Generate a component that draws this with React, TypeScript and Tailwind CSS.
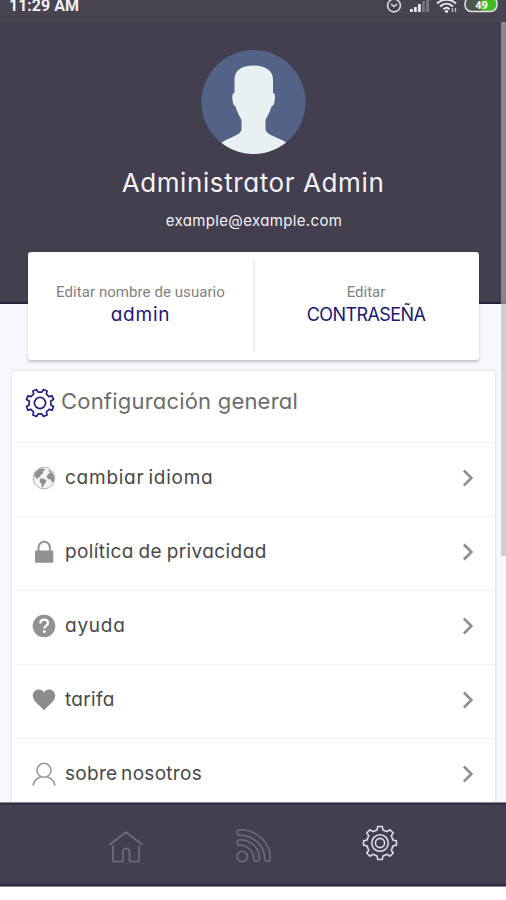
import type { ReactNode } from "react";

type SettingRow = {
  label: string;
  icon: ReactNode;
  textClass: string;
};

// Rounded gear outline, teeth evenly spread around (cx, cy).
function gearPath(cx: number, cy: number, outer: number, inner: number, offset: number) {
  const steps: [number, number][] = [
    [-12.5, inner],
    [-8, outer],
    [8, outer],
    [12.5, inner],
  ];
  const points: string[] = [];
  for (let tooth = 0; tooth < 8; tooth++) {
    for (const [delta, radius] of steps) {
      const angle = ((tooth * 45 + offset + delta) * Math.PI) / 180;
      points.push(`${(cx + radius * Math.cos(angle)).toFixed(2)} ${(cy + radius * Math.sin(angle)).toFixed(2)}`);
    }
  }
  return `M${points.join("L")}Z`;
}

function GearIcon() {
  return (
    <svg width="30" height="30" viewBox="0 0 30 30" fill="none" stroke="#242080" strokeWidth="1.7" strokeLinejoin="round" aria-hidden>
      <path d={gearPath(15, 15, 14, 11, 22.5)} />
      <circle cx="15" cy="15" r="5.6" />
    </svg>
  );
}

function GlobeIcon() {
  return (
    <svg width="24" height="24" viewBox="0 0 24 24" aria-hidden>
      <circle cx="12" cy="12" r="10.8" fill="#f4f4f4" stroke="#b0b0b0" strokeWidth="1" />
      <path
        fill="#8f8f8f"
        d="M4 5.5L8 2.5l4 .2 1.2 1.6-2.4 1.2.4 1.8-2.6 1.8-.4 2.2-2.4-.3.8 2-1.6-.2-2.4-2.6C1.8 8 3 6.8 4 5.5zM8.4 12.4l3.2.4 2.6 1.5-.6 2.7-1.8 1.6-.8 3-1.3-.5-.4-3.5-1.8-2.2zM15.5 4.2l2.500.2 3 3.6 1.3 4-.6 3.8-1.8.8-1.3-3-2.600-.6-1.300-2.400 1.300-2.600 2-.8-.5-1.500z"
      />
    </svg>
  );
}

function LockIcon() {
  return (
    <svg width="24" height="24" viewBox="0 0 24 24" aria-hidden>
      <path d="M6.5 12V7.500a5.700 5.700 0 0 1 11.400 0V12" fill="none" stroke="#919191" strokeWidth="2" />
      <rect x="3" y="10.500" width="18.300" height="12.300" rx="1" fill="#919191" />
    </svg>
  );
}

function HelpIcon() {
  return (
    <svg width="24" height="24" viewBox="0 0 24 24" aria-hidden>
      <circle cx="12" cy="12" r="11.300" fill="#919191" />
      <path d="M8.300 9.500c0-2.400 1.500-3.800 3.800-3.800s3.900 1.300 3.900 3.400c0 2.800-3.700 2.700-3.700 5.400" fill="none" stroke="#fff" strokeWidth="2.300" />
      <circle cx="12.300" cy="17.500" r="1.500" fill="#fff" />
    </svg>
  );
}

function HeartIcon() {
  return (
    <svg width="24" height="24" viewBox="0 0 24 24" aria-hidden>
      <path
        fill="#8c8c8c"
        d="M17 1.500c-2.200 0-4 1.200-5 2.900-1-1.700-2.800-2.900-5-2.900C3.500 1.500.800 4.200.800 7.600c0 6.300 7 9.600 11.200 15 4.200-5.400 11.200-8.700 11.200-15C23.200 4.200 20.500 1.500 17 1.500z"
      />
    </svg>
  );
}

function PersonIcon() {
  return (
    <svg width="24" height="24" viewBox="0 0 24 24" fill="none" stroke="#999" strokeWidth="1.600" strokeLinecap="round" aria-hidden>
      <circle cx="12" cy="8.300" r="7" />
      <path d="M1.200 23c.7-3.900 3.300-6.400 7-8M22.800 23c-.7-3.900-3.300-6.400-7-8" />
    </svg>
  );
}

function ChevronIcon() {
  return (
    <svg width="12" height="18" viewBox="0 0 12 18" fill="none" stroke="#8f8f8f" strokeWidth="2.600" aria-hidden>
      <path d="M1.900 1.500L9.400 9l-7.500 7.500" />
    </svg>
  );
}

function StatusIcons() {
  return (
    <svg width="120" height="16" viewBox="0 0 120 16" fill="none" aria-hidden>
      <g stroke="#dddce2" strokeWidth="1.600">
        <circle cx="8" cy="5.500" r="6.400" />
        <path d="M5 4l3 2.500L11 4" />
      </g>
      <g fill="#e6e5ea">
        <rect x="24" y="9" width="2.800" height="3" />
        <rect x="28" y="7" width="2.800" height="5" />
        <rect x="32" y="4" width="2.800" height="8" />
      </g>
      <g fill="#77737f">
        <rect x="36" y="1" width="2.800" height="11" />
        <rect x="40" y="-2" width="3" height="14" />
      </g>
      <g stroke="#e6e5ea" strokeWidth="2">
        <path d="M51 3.500c5.500-5 13.500-5 19 0" />
        <path d="M54 6.500c4-3.600 9-3.600 13 0" />
        <path d="M57.500 9.200c2-1.700 4.300-1.700 6 0" />
      </g>
      <circle cx="60.500" cy="11.300" r="1.600" fill="#e6e5ea" />
      <path d="M66.500 8v4M69.500 8v4" stroke="#c5c3cb" strokeWidth="1.300" />
      <rect x="79" y="-3" width="32" height="14.500" rx="6.500" fill="#4d584d" />
      <path d="M95-3h10a6 6 0 0 1 6 6v2.500a6 6 0 0 1-6 6H95z" fill="#41bd23" />
      <rect x="79" y="-3" width="32" height="14.500" rx="6.500" stroke="#e3e2e7" strokeWidth="1.500" />
      <text x="95.500" y="8.500" textAnchor="middle" fill="#fff" className="font-['Roboto',sans-serif] text-[11px] font-bold">
        49
      </text>
    </svg>
  );
}

function Avatar() {
  return (
    <svg width="106" height="106" viewBox="0 0 106 106" aria-hidden>
      <defs>
        <clipPath id="avatar-clip">
          <circle cx="53.5" cy="52" r="52" />
        </clipPath>
      </defs>
      <g clipPath="url(#avatar-clip)">
        <rect width="106" height="106" fill="#536287" />
        <path
          fill="#e9f0f2"
          d="M53.500 15.500c-12 0-19 5-19 14V43c-2 0-2.600 3-2 7 .5 4 1.300 6 3 6.500 1.500 5.500 4 9.500 6 13.500v9.500c-1 6-11 7-20.500 13.500v14h66V93c-9.500-6.500-20.500-7.500-21.500-13.500V70c2-4 4.500-8 6-13.500 2-.5 2.700-2.500 3.200-6.500.6-4 .1-7-1.700-7V29.500c0-9-7.500-14-19.500-14z"
        />
      </g>
    </svg>
  );
}

const rows: SettingRow[] = [
  { label: "cambiar idioma", icon: <GlobeIcon />, textClass: "tracking-[0.75px] [word-spacing:-2px]" },
  { label: "política de privacidad", icon: <LockIcon />, textClass: "tracking-[0.4px] [word-spacing:-1px]" },
  { label: "ayuda", icon: <HelpIcon />, textClass: "tracking-[0.75px]" },
  { label: "tarifa", icon: <HeartIcon />, textClass: "tracking-[0.3px]" },
  { label: "sobre nosotros", icon: <PersonIcon />, textClass: "tracking-[0.3px] [word-spacing:-2px]" },
];

function TabBar() {
  return (
    <nav className="relative z-10 flex h-[85px] shrink-0 border-y border-[#85828e] bg-[#433f50] px-[63px] shadow-[inset_0_2px_0_#353044,inset_0_-2px_0_#302b40]">
      <button type="button" aria-label="home" className="flex flex-1 items-center justify-center pt-1">
        <svg width="36" height="36" viewBox="0 0 36 36" fill="none" stroke="#716d7b" strokeWidth="1.700" strokeLinecap="round" strokeLinejoin="round">
          <path d="M2 15.500L18 3l16 12.500M5 17v14.500q0 1 1 1h8q1 0 1-1V23q0-3.500 3.300-3.500T21.500 23v8.500q0 1 1 1H30q1 0 1-1V17" />
        </svg>
      </button>
      <button type="button" aria-label="feed" className="flex flex-1 items-center justify-center pt-0.5 pl-0.5">
        <svg width="36" height="36" viewBox="0 0 36 36" fill="none" strokeLinecap="round">
          <g stroke="#716d7b" strokeWidth="7.200">
            <path d="M4 4.500C19 4.500 31.500 16 31.500 30.500" />
            <path d="M4 14.500c9 0 16.500 7 16.500 16" />
          </g>
          <g stroke="#433f50" strokeWidth="4.200">
            <path d="M4 4.500C19 4.500 31.500 16 31.500 30.500" />
            <path d="M4 14.500c9 0 16.500 7 16.500 16" />
          </g>
          <circle cx="6.300" cy="28.500" r="5.200" stroke="#716d7b" strokeWidth="1.600" />
        </svg>
      </button>
      <button type="button" aria-label="settings" className="flex flex-1 items-center justify-center pb-[3px]">
        <svg width="36" height="36" viewBox="0 0 36 36" fill="none" stroke="#dedce6" strokeWidth="1.600" strokeLinejoin="round">
          <path d={gearPath(18, 18, 16.6, 13.4, 0)} />
          <circle cx="18" cy="18" r="8.300" />
          <circle cx="18" cy="18" r="4.600" />
        </svg>
      </button>
    </nav>
  );
}

export default function App() {
  return (
    <div className="relative flex h-[900px] w-[506px] flex-col overflow-hidden bg-white font-['Inter','Noto_Sans',sans-serif] [font-feature-settings:'cv11'_1]">
      <div className="flex h-[22px] shrink-0 items-start justify-between bg-[#474351] pl-[9px]">
        <span className="-mt-[3px] font-['Roboto',sans-serif] text-[16px] leading-[18px] font-bold text-[#f1f0f4]">11:29 AM</span>
        <StatusIcons />
      </div>

      <div className="flex min-h-0 flex-1 flex-col overflow-hidden bg-[#f6f8fd]">
        <header className="flex h-[282px] shrink-0 flex-col items-center border-b-2 border-[#29243e] bg-[#433f4e] pt-7">
          <Avatar />
          <h1 className="mt-[10px] text-[26px] leading-[34px] tracking-[0.6px] whitespace-nowrap text-[#f4f3f7]">Administrator Admin</h1>
          <p className="mt-[11px] pl-0.5 text-[15px] leading-5 tracking-[0.35px] whitespace-nowrap text-[#f4f3f7]">example@example.com</p>
        </header>

        <section className="relative mx-7 -mt-[52px] flex h-[108px] w-[451px] shrink-0 items-center rounded-[3px] bg-white shadow-[0_2px_3px_rgba(0,0,0,0.22)]">
          <button type="button" className="flex h-[92px] w-[227px] flex-col items-center border-r-2 border-[#ededed] pt-[22px]">
            <span className="font-['Roboto',sans-serif] text-[15px] leading-5 tracking-[0.07px] text-[#818181]">Editar nombre de usuario</span>
            <span className="mt-px text-[19px] leading-6 tracking-[0.8px] text-[#1d1672]">admin</span>
          </button>
          <button type="button" className="flex h-[92px] flex-1 flex-col items-center pt-[22px] pr-0.5">
            <span className="font-['Roboto',sans-serif] text-[15px] leading-5 text-[#818181]">Editar</span>
            <span className="mt-px text-[18px] leading-6 tracking-[-0.6px] text-[#1d1672]">CONTRASEÑA</span>
          </button>
        </section>

        <section className="mt-[11px] ml-3 w-[483px] shrink-0 rounded-t-[3px] bg-white shadow-[0_0_3px_rgba(0,0,0,0.18)]">
          <div className="flex h-[71px] items-start pt-[17px] pl-[13px]">
            <GearIcon />
            <h2 className="ml-[6px] text-[22px] leading-[27px] tracking-[0.2px] whitespace-nowrap text-[#6c6c6c]">Configuración general</h2>
          </div>
          <ul className="ml-1">
            {rows.map((row) => (
              <li key={row.label} className="flex h-[74px] items-center border-t border-[#f3f3f3] pr-[21px] pb-[3px] pl-4">
                {row.icon}
                <span className={`ml-[9px] flex-1 text-[19px] leading-6 whitespace-nowrap text-[#484848] ${row.textClass}`}>
                  {row.label}
                </span>
                <ChevronIcon />
              </li>
            ))}
          </ul>
        </section>
      </div>

      <TabBar />
      <div className="h-[13px] shrink-0 bg-white" />

      {/* scrollbar thumb over the page */}
      <div className="absolute top-[22px] right-0 h-[534px] w-[5px] bg-[#b5b5b5]/60" />
    </div>
  );
}
